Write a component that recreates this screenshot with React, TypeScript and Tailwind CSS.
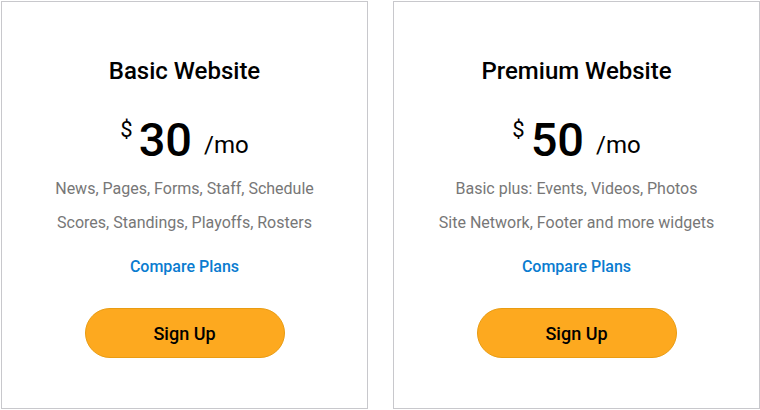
const plans = [
  {
    name: 'Basic Website',
    price: '30',
    lines: ['News, Pages, Forms, Staff, Schedule', 'Scores, Standings, Playoffs, Rosters'],
  },
  {
    name: 'Premium Website',
    price: '50',
    lines: ['Basic plus: Events, Videos, Photos', 'Site Network, Footer and more widgets'],
  },
];

const PlanCard = ({ name, price, lines }: { name: string; price: string; lines: string[] }) => (
  <div className="flex h-[408px] w-[367px] shrink-0 flex-col items-center border border-[#c8c8cc] bg-white">
    <h2 className="mt-[55px] text-[24px] font-medium leading-[28px] text-black">{name}</h2>
    {/* price */}
    <div className="mt-[31px] flex items-start leading-none text-black">
      <span className="mt-[3px] text-[22px]">$</span>
      <span className="ml-[6px] text-[47px] font-medium">{price}</span>
      <span className="ml-[12px] mt-[17px] text-[24px]">/mo</span>
    </div>
    <div className="mt-[14px] flex flex-col items-center gap-[10px] text-[16px] leading-[24px] text-[#777777]">
      {lines.map((l) => (
        <p key={l}>{l}</p>
      ))}
    </div>
    <a href="#" className="mt-[20px] text-[16px] font-medium leading-[24px] text-[#0a7cd0]">
      Compare Plans
    </a>
    <button className="mt-[29px] h-[50px] w-[200px] rounded-full border border-[#e99c12] bg-[#fda91f] text-[18px] font-medium text-black">
      Sign Up
    </button>
  </div>
);

export default function App() {
  return (
    <div className="flex h-[410px] w-[760px] gap-[25px] overflow-hidden bg-white pl-px pt-px font-['Roboto',sans-serif]">
      {plans.map((p) => (
        <PlanCard key={p.name} {...p} />
      ))}
    </div>
  );
}
